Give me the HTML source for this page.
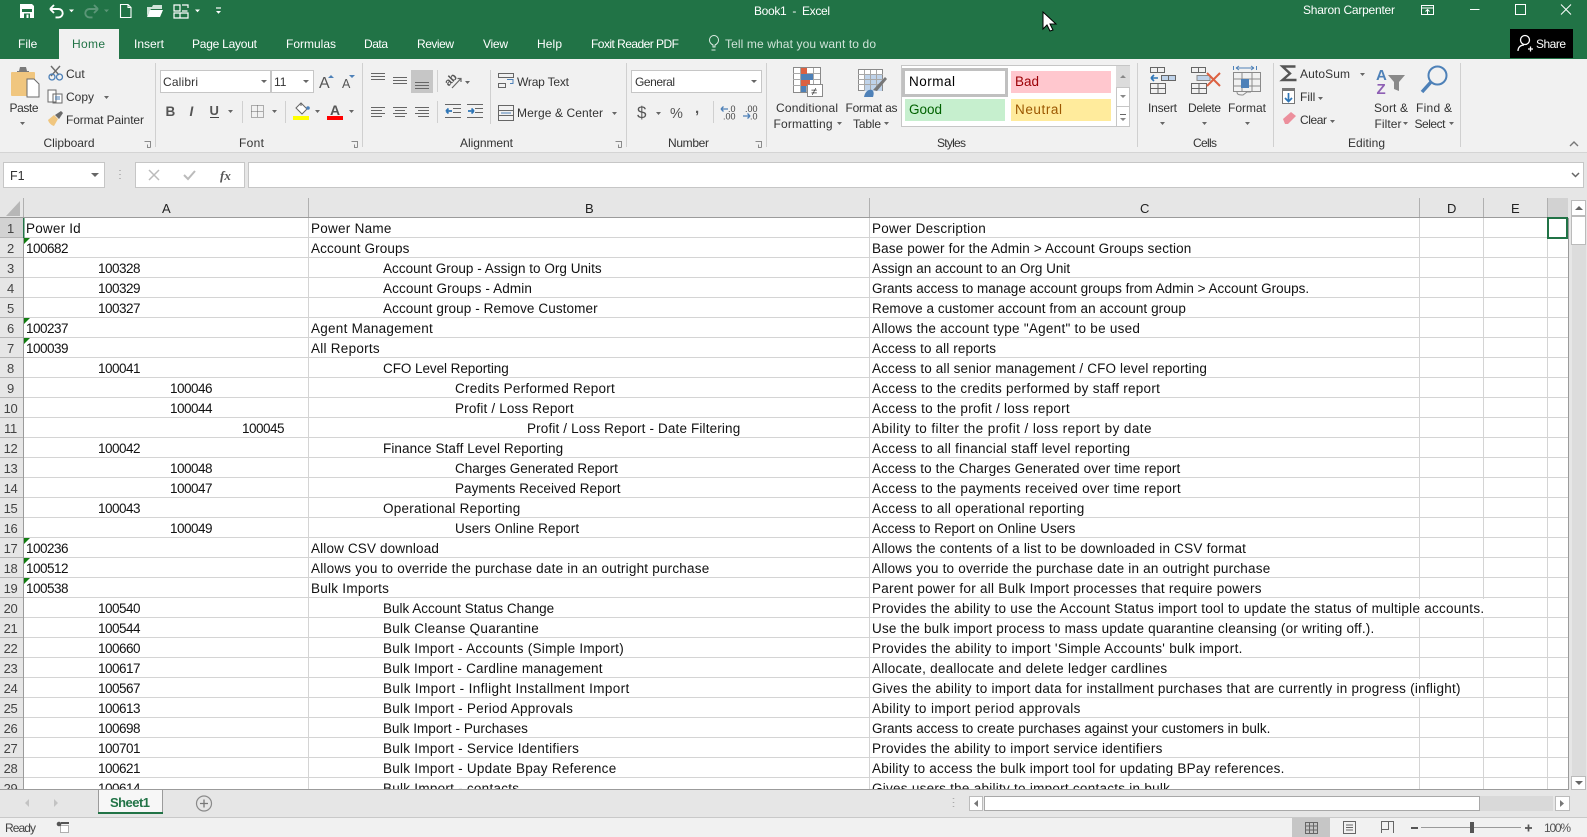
<!DOCTYPE html>
<html><head><meta charset="utf-8"><title>Book1 - Excel</title>
<style>
html,body{margin:0;padding:0;width:1587px;height:837px;overflow:hidden;background:#fff;font-family:"Liberation Sans",sans-serif}
#bar{position:absolute;left:0;top:0;width:1587px;height:59px;background:#217346}
#rib{position:absolute;left:0;top:59px;width:1587px;height:93px;background:#f1f1f1}
#fb{position:absolute;left:0;top:152px;width:1587px;height:46px;background:#e6e6e6;border-top:1px solid #d4d4d4;box-sizing:border-box}
#hdr{position:absolute;left:0;top:198px;width:1571px;height:20px;background:#e6e6e6;border-bottom:1px solid #9b9b9b;box-sizing:border-box}
#side{position:absolute;left:0;top:218px;width:24px;height:572px;background:#e6e6e6;border-right:1px solid #9b9b9b;box-sizing:border-box;overflow:hidden}
#side div{height:20px;line-height:22px;text-align:center;font-size:13px;letter-spacing:-.3px;color:#444;border-bottom:1px solid #b5b5b5;box-sizing:border-box;padding-right:2px}
#grid{position:absolute;left:24px;top:218px;width:1544px;height:571px;overflow:hidden;background:repeating-linear-gradient(to bottom,#fff 0,#fff 19px,#d4d4d4 19px,#d4d4d4 20px)}
#grid .v{position:absolute;top:0;bottom:0;width:1px;background:#d4d4d4}
#grid p{position:absolute;margin:0;left:0;width:1544px;height:19px;font-size:13.5px;line-height:20px;color:#111;white-space:nowrap;letter-spacing:.26px}
#grid span{position:absolute;top:1px;height:18px}
.a0,.a1,.a2,.a3{letter-spacing:-.5px}
.a0{left:2px}.a1{left:74px}.a2{left:146px}.a3{left:218px}
.b0{left:287px}.b1{left:359px}.b2{left:431px}.b3{left:503px}
.c{left:848px}
.g{border-left:6px solid #107c10;border-bottom:6px solid transparent;position:absolute;left:0;top:0;width:0;height:0}
#tabs{position:absolute;left:0;top:789px;width:1587px;height:29px;background:#e6e6e6;border-top:1px solid #9b9b9b;border-bottom:1px solid #c9c9c9;box-sizing:border-box}
#st{position:absolute;left:0;top:818px;width:1587px;height:19px;background:#f1f1f1}
svg{position:absolute;left:0;top:0}
svg text{font-family:"Liberation Sans",sans-serif;font-size:12px;fill:#333}
.w text{fill:#fff}
</style></head><body>
<div id="bar"></div><div id="rib"></div><div id="fb"></div><div id="hdr"></div>
<div id="side"><div style="background:#d2d2d2">1</div><div>2</div><div>3</div><div>4</div><div>5</div><div>6</div><div>7</div><div>8</div><div>9</div><div>10</div><div>11</div><div>12</div><div>13</div><div>14</div><div>15</div><div>16</div><div>17</div><div>18</div><div>19</div><div>20</div><div>21</div><div>22</div><div>23</div><div>24</div><div>25</div><div>26</div><div>27</div><div>28</div><div>29</div></div>
<div id="grid">
<div class="v" style="left:284px"></div><div class="v" style="left:845px"></div><div class="v" style="left:1395px"></div><div class="v" style="left:1459px"></div><div class="v" style="left:1523px"></div>
<p style="top:0"><span class="a0" style="letter-spacing:.2px">Power Id</span><span class="b0">Power Name</span><span class="c">Power Description</span></p>
<p style="top:20px"><i class="g"></i><span class="a0">100682</span><span class="b0" style="letter-spacing:.12px">Account Groups</span><span class="c" style="letter-spacing:.14px">Base power for the Admin &gt; Account Groups section</span></p>
<p style="top:40px"><span class="a1">100328</span><span class="b1" style="letter-spacing:.03px">Account Group - Assign to Org Units</span><span class="c" style="letter-spacing:0">Assign an account to an Org Unit</span></p>
<p style="top:60px"><span class="a1">100329</span><span class="b1" style="letter-spacing:.12px">Account Groups - Admin</span><span class="c" style="letter-spacing:0">Grants access to manage account groups from Admin &gt; Account Groups.</span></p>
<p style="top:80px"><span class="a1">100327</span><span class="b1" style="letter-spacing:.1px">Account group - Remove Customer</span><span class="c" style="letter-spacing:.07px">Remove a customer account from an account group</span></p>
<p style="top:100px"><i class="g"></i><span class="a0">100237</span><span class="b0">Agent Management</span><span class="c">Allows the account type "Agent" to be used</span></p>
<p style="top:120px"><i class="g"></i><span class="a0">100039</span><span class="b0">All Reports</span><span class="c" style="letter-spacing:.12px">Access to all reports</span></p>
<p style="top:140px"><span class="a1">100041</span><span class="b1" style="letter-spacing:-.06px">CFO Level Reporting</span><span class="c" style="letter-spacing:.15px">Access to all senior management / CFO level reporting</span></p>
<p style="top:160px"><span class="a2">100046</span><span class="b2">Credits Performed Report</span><span class="c">Access to the credits performed by staff report</span></p>
<p style="top:180px"><span class="a2">100044</span><span class="b2" style="letter-spacing:.16px">Profit / Loss Report</span><span class="c">Access to the profit / loss report</span></p>
<p style="top:200px"><span class="a3">100045</span><span class="b3" style="letter-spacing:.15px">Profit / Loss Report - Date Filtering</span><span class="c" style="letter-spacing:.42px">Ability to filter the profit / loss report by date</span></p>
<p style="top:220px"><span class="a1">100042</span><span class="b1" style="letter-spacing:.09px">Finance Staff Level Reporting</span><span class="c">Access to all financial staff level reporting</span></p>
<p style="top:240px"><span class="a2">100048</span><span class="b2" style="letter-spacing:0">Charges Generated Report</span><span class="c" style="letter-spacing:.14px">Access to the Charges Generated over time report</span></p>
<p style="top:260px"><span class="a2">100047</span><span class="b2" style="letter-spacing:.05px">Payments Received Report</span><span class="c">Access to the payments received over time report</span></p>
<p style="top:280px"><span class="a1">100043</span><span class="b1">Operational Reporting</span><span class="c">Access to all operational reporting</span></p>
<p style="top:300px"><span class="a2">100049</span><span class="b2" style="letter-spacing:.1px">Users Online Report</span><span class="c" style="letter-spacing:0">Access to Report on Online Users</span></p>
<p style="top:320px"><i class="g"></i><span class="a0">100236</span><span class="b0" style="letter-spacing:.15px">Allow CSV download</span><span class="c" style="letter-spacing:.22px">Allows the contents of a list to be downloaded in CSV format</span></p>
<p style="top:340px"><i class="g"></i><span class="a0">100512</span><span class="b0" style="letter-spacing:.21px">Allows you to override the purchase date in an outright purchase</span><span class="c" style="letter-spacing:.21px">Allows you to override the purchase date in an outright purchase</span></p>
<p style="top:360px"><i class="g"></i><span class="a0">100538</span><span class="b0">Bulk Imports</span><span class="c">Parent power for all Bulk Import processes that require powers</span></p>
<p style="top:380px"><span class="a1">100540</span><span class="b1" style="letter-spacing:0">Bulk Account Status Change</span><span class="c" style="background:#fff">Provides the ability to use the Account Status import tool to update the status of multiple accounts.</span></p>
<p style="top:400px"><span class="a1">100544</span><span class="b1">Bulk Cleanse Quarantine</span><span class="c" style="letter-spacing:.21px">Use the bulk import process to mass update quarantine cleansing (or writing off.).</span></p>
<p style="top:420px"><span class="a1">100660</span><span class="b1">Bulk Import - Accounts (Simple Import)</span><span class="c" style="letter-spacing:.31px">Provides the ability to import 'Simple Accounts' bulk import.</span></p>
<p style="top:440px"><span class="a1">100617</span><span class="b1" style="letter-spacing:.2px">Bulk Import - Cardline management</span><span class="c">Allocate, deallocate and delete ledger cardlines</span></p>
<p style="top:460px"><span class="a1">100567</span><span class="b1" style="letter-spacing:.38px">Bulk Import - Inflight Installment Import</span><span class="c" style="background:#fff">Gives the ability to import data for installment purchases that are currently in progress (inflight)</span></p>
<p style="top:480px"><span class="a1">100613</span><span class="b1">Bulk Import - Period Approvals</span><span class="c" style="letter-spacing:.38px">Ability to import period approvals</span></p>
<p style="top:500px"><span class="a1">100698</span><span class="b1" style="letter-spacing:.04px">Bulk Import - Purchases</span><span class="c" style="letter-spacing:0">Grants access to create purchases against your customers in bulk.</span></p>
<p style="top:520px"><span class="a1">100701</span><span class="b1">Bulk Import - Service Identifiers</span><span class="c">Provides the ability to import service identifiers</span></p>
<p style="top:540px"><span class="a1">100621</span><span class="b1">Bulk Import - Update Bpay Reference</span><span class="c" style="letter-spacing:.23px">Ability to access the bulk import tool for updating BPay references.</span></p>
<p style="top:560px"><span class="a1">100614</span><span class="b1">Bulk Import - contacts</span><span class="c">Gives users the ability to import contacts in bulk</span></p>
</div>
<div id="tabs"></div><div id="st"></div>

<svg width="1587" height="837" viewBox="0 0 1587 837">
<!-- title bar -->
<path d="M20 4h12l2 2v12H20z" fill="#fff"/><rect x="22" y="9" width="10" height="3" fill="#217346"/><rect x="24" y="13.500" width="6" height="4.500" fill="#217346"/><rect x="26.500" y="14.500" width="2" height="3.500" fill="#fff"/>
<g fill="none" stroke="#fff" stroke-width="1.500">
<path d="M50 9h8.500a4.200 4.200 0 0 1 0 8.400h-3M50 9l4-4M50 9l4 4" stroke-width="1.900"/>
<path d="M98 9h-8.500a4.200 4.200 0 0 0 0 8.400h3M98 9l-4-4M98 9l-4 4" stroke="#5b9677" stroke-width="1.900"/>
<path d="M120.500 4.500h7.500l3 3v10h-10.500zM128 4.500v3h3" stroke-width="1.100"/>
<path d="M174 5h6v6h-6zM182 5h6v3M182 11h5.500M174 13h14v5h-14zM180 13v5" stroke-width="1.200"/>
<path d="M216 8h5" stroke-width="1.200"/>
</g>
<path d="M147 16V7h5l1-2h9v4h-11z" fill="#cfe3d8"/><path d="M147 17l3-7h13l-3 7z" fill="#fff"/>
<g fill="#fff"><path d="M69 9.500h5l-2.500 2.700zM195 9.500h5l-2.500 2.700zM216 11h5l-2.500 2.700z"/><path d="M104 9.500h5l-2.500 2.700z" fill="#5b9677"/></g>
<g class="w">
<text x="754" y="15" textLength="76" style="white-space:pre">Book1  -  Excel</text>
<text x="1303" y="14" textLength="92">Sharon Carpenter</text>
<text x="18" y="48">File</text>
<text x="134" y="48">Insert</text>
<text x="192" y="48" textLength="65">Page Layout</text>
<text x="286" y="48">Formulas</text>
<text x="364" y="48" textLength="24">Data</text>
<text x="417" y="48" textLength="37">Review</text>
<text x="483" y="48" textLength="25">View</text>
<text x="537" y="48" textLength="25">Help</text>
<text x="591" y="48" textLength="88">Foxit Reader PDF</text>
<text x="725" y="48" textLength="151" style="fill:#cfe3d8">Tell me what you want to do</text>
</g>
<path d="M713 47v-2c-2-1-3.500-3-3.500-5a4.500 4.500 0 0 1 9 0c0 2-1.500 4-3.500 5v2zM711.500 50h4" fill="none" stroke="#dfeee6" stroke-width="1"/>
<g fill="none" stroke="#fff" stroke-width="1">
<path d="M1421.500 5.500h12v9h-12zM1421.500 8h12M1427.500 14v-4M1425.500 11.500l2-2 2 2"/>
<path d="M1470 9.500h9.500M1515.500 4.500h10v10h-10zM1561 4.500l10 10M1571 4.500l-10 10"/>
</g>
<rect x="1510" y="29" width="63" height="29" fill="#000"/>
<g fill="none" stroke="#fff" stroke-width="1.300"><circle cx="1525" cy="40" r="4.500"/><path d="M1518 51c0-4 3-6 6-6M1528 49h5M1530.500 46.500v5"/></g>
<text x="1536" y="48" textLength="30" style="fill:#fff">Share</text>
<rect x="59" y="29" width="60" height="31" fill="#f1f1f1"/>
<text x="72" y="48" textLength="33" style="fill:#217346">Home</text>
<!-- cursor -->
<path d="M1043 12v17l4-4 3 6 3-1-3-6h6z" fill="#fff" stroke="#000" stroke-width="1"/>

<!-- separators -->
<g fill="#d0d0d0">
<rect x="155" y="63" width="1" height="84"/><rect x="362" y="63" width="1" height="84"/><rect x="626" y="63" width="1" height="84"/><rect x="766" y="63" width="1" height="84"/><rect x="1137" y="63" width="1" height="84"/><rect x="1273" y="63" width="1" height="84"/><rect x="1460" y="63" width="1" height="84"/>
<rect x="242" y="101" width="1" height="22"/><rect x="285" y="101" width="1" height="22"/><rect x="437" y="70" width="1" height="22"/><rect x="437" y="101" width="1" height="22"/><rect x="490" y="70" width="1" height="54"/><rect x="713" y="101" width="1" height="22"/>
</g>

<!-- Clipboard -->
<rect x="11" y="72" width="24" height="24" rx="1" fill="#f0c67f"/>
<path d="M17 72h12v-1h-2l-1-4h-6l-1 4h-2z" fill="#7a7a7a"/>
<path d="M27 79h7l5 5v13H27z" fill="#fff" stroke="#6a6a6a"/>
<g fill="none" stroke="#6a6a6a" stroke-width="1.400"><path d="M51 66l8 9M60 66l-9 10"/></g>
<circle cx="52" cy="77" r="3" fill="none" stroke="#4e81b8" stroke-width="1.300"/><circle cx="59.500" cy="77" r="3" fill="none" stroke="#4e81b8" stroke-width="1.300"/>
<path d="M48 90h8v12h-8zM53 94h9v9h-9z" fill="#fff" stroke="#6a6a6a"/><path d="M55 97h5M55 99h5" stroke="#4e81b8"/>
<path d="M48 120l6-5 4 4-4 7c-3-1-5-3-6-6z" fill="#f0c67f"/><path d="M55 115l6-4 2 2-4 6z" fill="#6a6a6a"/>
<text x="9.500" y="112" textLength="29">Paste</text>
<text x="66" y="78">Cut</text><text x="66" y="101" textLength="28">Copy</text><text x="66" y="124" textLength="78">Format Painter</text>
<text x="43.500" y="147" textLength="51">Clipboard</text><text x="239" y="147" textLength="25">Font</text><text x="460" y="147" textLength="53">Alignment</text><text x="668" y="147" textLength="41">Number</text><text x="937" y="147" textLength="29">Styles</text><text x="1193" y="147" textLength="24">Cells</text><text x="1348" y="147" textLength="37">Editing</text>
<g fill="#666">
<path d="M20 122h5l-2.500 3zM104 96h5l-2.500 3zM228 110h5l-2.500 3zM272 110h5l-2.500 3zM315 110h5l-2.500 3zM349 110h5l-2.500 3zM465 81h5l-2.500 3zM612 112h5l-2.500 3zM656 112h5l-2.500 3zM1160 122h5l-2.500 3zM1202 122h5l-2.500 3zM1245 122h5l-2.500 3zM1360 73h5l-2.500 3zM1318 97h5l-2.500 3zM1330 120h5l-2.500 3zM837 122h5l-2.500 3zM884 122h5l-2.500 3zM1403 122h5l-2.500 3zM1449 122h5l-2.500 3z"/>
</g>
<g fill="none" stroke="#8a8a8a"><path d="M144.500 141.500h6v6M147.500 144.500v3h3M351.500 141.500h6v6M354.500 144.500v3h3M615.500 141.500h6v6M618.500 144.500v3h3M755.500 141.500h6v6M758.500 144.500v3h3"/></g>

<!-- Font -->
<rect x="160.500" y="70.500" width="110" height="22" fill="#fff" stroke="#c6c6c6"/>
<rect x="271.500" y="70.500" width="42" height="22" fill="#fff" stroke="#c6c6c6"/>
<path d="M261 80h6l-3 3zM303 80h6l-3 3z" fill="#666"/>
<text x="163" y="86" textLength="35">Calibri</text><text x="274" y="86">11</text>
<text x="319" y="88" style="font-size:16px;fill:#555">A</text><text x="342" y="88" style="font-size:12.500px;fill:#555">A</text>
<path d="M328 78l3-3 3 3zM349 75h6l-3 3z" fill="#4e81b8"/>
<text x="165.500" y="116" style="font-size:13.500px;font-weight:bold;fill:#555">B</text><text x="189.500" y="116" style="font-size:13.500px;font-style:italic;font-weight:bold;fill:#555">I</text><text x="209.500" y="115" style="font-size:13px;font-weight:bold;fill:#555">U</text>
<path d="M210 117.500h9" stroke="#444"/>
<g fill="none" stroke="#666" stroke-dasharray="1 1"><path d="M251.500 105.500h12v12h-12zM257.500 105.500v12M251.500 111.500h12"/></g>
<path d="M296 108l5-5 6 6-5 5z" fill="#fff" stroke="#666"/><path d="M301 103v3" stroke="#666"/><circle cx="308" cy="108" r="1.800" fill="#4e81b8"/>
<rect x="293" y="116" width="16" height="4" fill="#ff0"/>
<text x="330" y="115" style="font-size:14px;font-weight:bold;fill:#555">A</text><rect x="327" y="116" width="16" height="4" fill="#f00"/>

<!-- Alignment -->
<rect x="411" y="70" width="22" height="23" fill="#c6c6c6"/>
<g stroke="#666" fill="none">
<path d="M371 73.500h14M371 76.500h14M371 79.500h14"/>
<path d="M393 77.500h14M393 80.500h14M393 83.500h14"/>
<path d="M415 82.500h14M415 85.500h14M415 88.500h14"/>
<path d="M371 107.500h14M371 110.500h11M371 113.500h14M371 116.500h11"/>
<path d="M393 107.500h14M395 110.500h10M393 113.500h14M395 116.500h10"/>
<path d="M415 107.500h14M418 110.500h11M415 113.500h14M418 116.500h11"/>
<path d="M445 104.500h16M453 108.500h8M453 112.500h8M445 117.500h16"/>
<path d="M467 104.500h16M475 108.500h8M475 112.500h8M467 117.500h16"/>
<path d="M452 88l9-9.500M457.500 78.500h3.500v3.500" stroke-width="1.200"/>
</g>
<path d="M446 111h6M446 111l2.500-2.500M446 111l2.500 2.500M468 111h6M474 111l-2.500-2.500M474 111l-2.500 2.500" stroke="#2e75b6" stroke-width="1.700" fill="none"/>
<text x="445" y="84" style="font-size:11px;font-weight:bold;fill:#555" transform="rotate(-45 450 81)">ab</text>
<!-- wrap / merge -->
<g fill="none" stroke="#666"><path d="M498.500 73.500h15v4h-15zM498.500 83.500h7v4h-7z"/><path d="M507 79.500h6v4h-3" stroke="#4e81b8"/></g>
<text x="517" y="86" textLength="52">Wrap Text</text>
<g fill="none" stroke="#666"><path d="M498.500 105.500h15v15h-15zM498.500 110.500h15M498.500 115.500h15"/></g><path d="M501 113h10" stroke="#4e81b8"/>
<text x="517" y="117" textLength="86">Merge &amp; Center</text>

<!-- Number -->
<rect x="631.500" y="70.500" width="130" height="22" fill="#fff" stroke="#c6c6c6"/>
<path d="M751 80h6l-3 3z" fill="#666"/>
<text x="635" y="86" textLength="40">General</text>
<text x="637" y="118" style="font-size:17px;fill:#555">$</text>
<text x="670" y="118" style="font-size:14.500px;fill:#555">%</text>
<text x="695" y="113" style="font-size:15px;font-weight:bold;fill:#555">,</text>
<text x="728" y="112" style="font-size:9px;fill:#444">.0</text><text x="723" y="119.500" style="font-size:9px;fill:#444">.00</text>
<text x="745" y="112" style="font-size:9px;fill:#444">.00</text><text x="750" y="119.500" style="font-size:9px;fill:#444">.0</text>
<path d="M721 109h7M721 109l2.500-2.500M721 109l2.500 2.500M743 116h7M750 116l-2.500-2.500M750 116l-2.500 2.500" stroke="#4e81b8" stroke-width="1.300" fill="none"/>

<!-- Styles -->
<rect x="793.500" y="67.500" width="27" height="25" fill="#fff" stroke="#8a8a8a"/>
<path d="M800.500 68v24M806.500 68v24M813.500 68v24M793 73.500h27M793 79.500h27M793 85.500h27" stroke="#a8a8a8"/>
<rect x="801" y="68" width="6" height="6" fill="#dc6141"/><rect x="801" y="74" width="12" height="6" fill="#4e81b8"/><rect x="801" y="80" width="9" height="6" fill="#dc6141"/><rect x="801" y="86" width="5" height="6" fill="#4e81b8"/>
<rect x="807.500" y="84.500" width="15" height="12" fill="#fff" stroke="#8a8a8a"/>
<text x="811" y="95" style="font-size:11px;fill:#333">≠</text>
<text x="776" y="112" textLength="62">Conditional</text><text x="773.500" y="128" textLength="59">Formatting</text>
<rect x="858.500" y="69.500" width="24" height="21" fill="#fff" stroke="#8a8a8a"/>
<rect x="864" y="74" width="18" height="17" fill="#bfd3ea"/>
<path d="M864.500 70v21M870.500 70v21M876.500 70v21M858 74.500h25M858 79.500h25M858 84.500h25" stroke="#a8a8a8"/>
<path d="M873 90l12-13 2 2-10 12z" fill="#777"/><path d="M864 97c1-5 4-8 8-7 2 1 2 4 1 7z" fill="#4e81b8"/>
<text x="845.500" y="112" textLength="52">Format as</text><text x="853" y="128" textLength="28">Table</text>
<rect x="901.500" y="65.500" width="228" height="61" fill="#fff" stroke="#c6c6c6"/>
<rect x="903.500" y="69.500" width="103" height="26" fill="#fff" stroke="#c0c0c0" stroke-width="3"/>
<rect x="1011" y="71" width="100" height="22" fill="#ffc7ce"/>
<rect x="905" y="99" width="100" height="22" fill="#c6efce"/>
<rect x="1011" y="99" width="100" height="22" fill="#ffeb9c"/>
<text x="909" y="86" textLength="46" style="font-size:13.500px;fill:#000">Normal</text>
<text x="1015" y="86" style="font-size:13.500px;fill:#9c0006">Bad</text>
<text x="909" y="114" style="font-size:13.500px;fill:#006100">Good</text>
<text x="1015" y="114" textLength="47" style="font-size:13.500px;fill:#9c5700">Neutral</text>
<rect x="1116" y="66" width="14" height="21" fill="#dcdcdc"/><rect x="1116.500" y="87.500" width="13" height="19" fill="#fff" stroke="#c6c6c6"/><rect x="1116.500" y="106.500" width="13" height="20" fill="#fff" stroke="#c6c6c6"/>
<path d="M1120 78h6l-3-3zM1120 95h6l-3 3zM1120 118h6l-3 3z" fill="#888"/><path d="M1120 114.500h6" stroke="#666"/>

<!-- Cells -->
<g fill="none" stroke="#666"><path d="M1150.500 67.500h14v5h-14zM1157.500 67.500v5M1150.500 83.500h15v10h-15zM1158 83.500v10M1150.500 88.500h15"/></g>
<rect x="1161.500" y="75.500" width="14" height="5" fill="#bfd3ea" stroke="#666"/><path d="M1168.500 76v5" stroke="#666"/>
<path d="M1151 78h7M1151 78l3-3M1151 78l3 3" stroke="#2e75b6" stroke-width="1.600" fill="none"/>
<text x="1148" y="112" textLength="29">Insert</text>
<g fill="none" stroke="#666"><path d="M1191.500 67.500h14v5h-14zM1198.500 67.500v5M1191.500 83.500h15v10h-15zM1199 83.500v10M1191.500 88.500h15"/></g>
<rect x="1197" y="75.500" width="13" height="5" fill="#bfd3ea" stroke="#8a8a8a"/>
<path d="M1207 73l13 13M1220 73l-13 13" stroke="#dc6141" stroke-width="2" fill="none"/>
<text x="1188" y="112" textLength="33">Delete</text>
<g fill="none" stroke="#8a8a8a"><path d="M1233.500 72.500h27v19h-27zM1242 72.500v19M1252 72.500v19M1233.500 79h27M1233.500 86h27M1237 92c0 3 3 3 6 3l4-3M1247 92h4"/></g>
<rect x="1241" y="79" width="8" height="9" fill="#4e81b8"/>
<path d="M1233.500 66v4M1256.500 66v4M1236 68h18M1236 68l3-2M1236 68l3 2M1254 68l-3-2M1254 68l-3 2" stroke="#4e81b8" fill="none"/>
<text x="1228" y="112" textLength="38">Format</text>

<!-- Editing -->
<path d="M1295.500 66.500h-13l7.500 7-7.500 6.500h14" fill="none" stroke="#555" stroke-width="2.400"/>
<text x="1300" y="78" textLength="50">AutoSum</text>
<rect x="1282.500" y="88.500" width="12" height="15" fill="#fff" stroke="#777"/><rect x="1283" y="88" width="12" height="3" fill="#777"/>
<path d="M1288.500 93v8M1285 98l3.500 3.500 3.500-3.500" stroke="#2e75b6" stroke-width="1.700" fill="none"/>
<text x="1300" y="101">Fill</text>
<path d="M1283 119l8-7 5 4-8 8h-3z" fill="#ec8f9c"/>
<text x="1300" y="124" textLength="27">Clear</text>
<text x="1376" y="80" style="font-size:15px;font-weight:bold;fill:#4e81b8">A</text>
<text x="1376.500" y="94" style="font-size:15px;font-weight:bold;fill:#8e5fb4">Z</text>
<path d="M1388 75h17l-6 7v9l-5-2v-7z" fill="#8a8a8a"/>
<text x="1374" y="112" textLength="34">Sort &amp;</text><text x="1374.500" y="128" textLength="27">Filter</text>
<circle cx="1437.500" cy="75.500" r="9" fill="none" stroke="#4e81b8" stroke-width="2"/>
<path d="M1431 82l-9 10" stroke="#4e81b8" stroke-width="3.500"/>
<text x="1416" y="112" textLength="36">Find &amp;</text><text x="1414.500" y="128" textLength="31">Select</text>
<path d="M1570 146l4-4 4 4" fill="none" stroke="#777" stroke-width="1.400"/>

<!-- formula bar -->
<rect x="3.500" y="162.500" width="101" height="25" fill="#fff" stroke="#c6c6c6"/>
<text x="10" y="180" style="font-size:12.500px">F1</text><path d="M91 173h8l-4 4z" fill="#666"/>
<path d="M120 170v1M120 174v1M120 178v1" stroke="#aaa" stroke-width="1.500"/>
<rect x="135.500" y="162.500" width="109" height="25" fill="#fff" stroke="#c6c6c6"/>
<path d="M149 170l10 10M159 170l-10 10" stroke="#bbb" stroke-width="1.500"/><path d="M184 175l4 4 7-8" stroke="#bbb" stroke-width="2" fill="none"/>
<text x="220" y="180" style="font-family:'Liberation Serif',serif;font-style:italic;font-size:13px;font-weight:bold;fill:#555">fx</text>
<rect x="248.500" y="162.500" width="1335" height="25" fill="#fff" stroke="#c6c6c6"/>
<path d="M1572 173l3.500 3.500 3.500-3.500" stroke="#666" stroke-width="1.500" fill="none"/>

<!-- column headers -->
<path d="M20 201v15H6z" fill="#b7b7b7"/>
<rect x="1548" y="198" width="20" height="19" fill="#d2d2d2"/>
<g fill="#b0b0b0"><rect x="23" y="198" width="1" height="19"/><rect x="308" y="198" width="1" height="19"/><rect x="869" y="198" width="1" height="19"/><rect x="1419" y="198" width="1" height="19"/><rect x="1483" y="198" width="1" height="19"/><rect x="1547" y="198" width="1" height="19"/></g>
<text x="162" y="213" style="font-size:13px;fill:#222">A</text><text x="585" y="213" style="font-size:13px;fill:#222">B</text><text x="1140" y="213" style="font-size:13px;fill:#222">C</text><text x="1447" y="213" style="font-size:13px;fill:#222">D</text><text x="1511" y="213" style="font-size:13px;fill:#222">E</text>
<rect x="23" y="218" width="1.500" height="20" fill="#217346"/>
<rect x="1568" y="198" width="19" height="592" fill="#e6e6e6"/>
<rect x="1568" y="218" width="1" height="572" fill="#9b9b9b"/>
<rect x="1548" y="218" width="19" height="20" fill="none" stroke="#217346" stroke-width="2"/>

<!-- v scroll -->
<rect x="1571.500" y="200.500" width="14" height="15" fill="#fff" stroke="#bbb"/><path d="M1575 210h8l-4-4z" fill="#666"/>
<rect x="1571.500" y="216.500" width="14" height="28" fill="#fff" stroke="#bbb"/>
<rect x="1572" y="245" width="14" height="531" fill="#dcdcdc"/>
<rect x="1571.500" y="776.500" width="14" height="13" fill="#fff" stroke="#bbb"/><path d="M1575 781h8l-4 4z" fill="#666"/>

<!-- sheet tabs -->
<path d="M29 799v8l-4-4zM54 799v8l4-4z" fill="#c3c3c3"/>
<rect x="98" y="790" width="65" height="24" fill="#f7f7f7"/><rect x="98" y="789" width="1" height="25" fill="#9b9b9b"/><rect x="162" y="789" width="1" height="25" fill="#9b9b9b"/><rect x="98" y="812" width="65" height="2" fill="#217346"/>
<text x="110" y="807" textLength="40" style="font-size:13px;font-weight:bold;fill:#217346">Sheet1</text>
<circle cx="204" cy="803.500" r="7.500" fill="none" stroke="#8a8a8a" stroke-width="1.200"/><path d="M200 803.500h8M204 799.500v8" stroke="#777" stroke-width="1.300"/>
<path d="M953.500 798v1M953.500 802v1M953.500 806v1" stroke="#aaa" stroke-width="1.500"/>
<rect x="969.500" y="796.500" width="13" height="14" fill="#fff" stroke="#bbb"/><path d="M978 800v7l-4-3.500z" fill="#777"/>
<rect x="984" y="796" width="569" height="15" fill="#d9d9d9"/>
<rect x="984.500" y="796.500" width="495" height="14" fill="#fff" stroke="#a8a8a8"/>
<rect x="1555.500" y="796.500" width="14" height="14" fill="#fff" stroke="#bbb"/><path d="M1560 800v7l4-3.500z" fill="#777"/>

<!-- status -->
<text x="5" y="832" textLength="31" style="font-size:12px;fill:#444">Ready</text>
<circle cx="59" cy="824" r="2.300" fill="#555"/><rect x="61" y="822" width="8" height="2" fill="#555"/><rect x="60.500" y="825.500" width="8" height="7" fill="#fff" stroke="#666" stroke-dasharray="1 1"/>
<rect x="1292" y="818" width="38" height="19" fill="#c6c6c6"/>
<g fill="none" stroke="#666"><path d="M1305.500 822.500h12v11h-12zM1309.500 822.500v11M1313.500 822.500v11M1305.500 826h12M1305.500 830h12"/>
<path d="M1343.500 821.500h12v12h-12zM1346 825h7M1346 827.500h7M1346 830h7"/>
<path d="M1381.500 833v-11.500h12V833M1381.500 829.500h7v-8"/></g>
<rect x="1411" y="827" width="7" height="2" fill="#555"/>
<rect x="1421" y="827" width="100" height="1" fill="#9a9a9a"/><rect x="1470" y="822" width="4" height="11" fill="#555"/>
<path d="M1525 828h7M1528.500 824.500v7" stroke="#555" stroke-width="1.700"/>
<text x="1544" y="832" textLength="27" style="font-size:12px;fill:#555">100%</text>
</svg>
</body></html>
